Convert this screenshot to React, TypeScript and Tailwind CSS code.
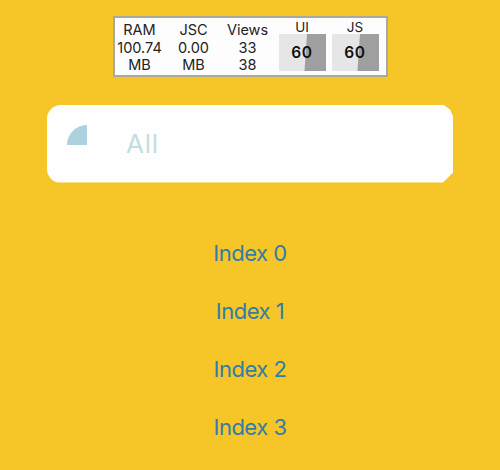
const stats = [
  { label: "RAM", lines: ["100.74", "MB"] },
  { label: "JSC", lines: ["0.00", "MB"] },
  { label: "Views", lines: ["33", "38"] },
];

function Stat({ label, lines }: { label: string; lines: string[] }) {
  return (
    <div className="flex w-[54px] flex-col items-center pt-[3px] text-[14.5px] leading-[17.5px] whitespace-nowrap text-[#222]">
      <span>{label}</span>
      {lines.map((line) => (
        <span key={line}>{line}</span>
      ))}
    </div>
  );
}

function FpsGraph({ label, fps }: { label: string; fps: number }) {
  return (
    <div className="flex w-[47px] flex-col items-center text-[#222]">
      <span className="h-[15px] text-[13.5px] leading-[17px]">{label}</span>
      <div className="relative flex h-[37px] w-full items-center justify-center bg-[#e6e6e6]">
        <svg className="absolute inset-0 h-full w-full" viewBox="0 0 47 37">
          <path d="M28 0H47V37H25.5Z" fill="#9f9f9f" />
        </svg>
        <span className="relative text-[15.5px] font-semibold tracking-[0.6px] text-[#111]">
          {fps}
        </span>
      </div>
    </div>
  );
}

export default function App() {
  return (
    <div className="flex h-[470px] w-[500px] flex-col items-center overflow-hidden bg-[#f6c628] pt-4 font-['Inter','Liberation_Sans',sans-serif]">
      <div className="flex h-[61px] w-[275px] border-2 border-[#aaa99d] bg-[#fdfdfd]">
        <div className="-ml-0.5 flex w-[166px] shrink-0">
          {stats.map((s) => (
            <Stat key={s.label} {...s} />
          ))}
        </div>
        <div className="flex gap-[6px] pt-px">
          <FpsGraph label="UI" fps={60} />
          <FpsGraph label="JS" fps={60} />
        </div>
      </div>

      <div className="mt-[27.5px] flex h-[78px] w-[406px] items-start rounded-l-[14px] bg-[#fefefe] [clip-path:polygon(0_0,396px_0,403px_5px,406px_12px,406px_68px,396px_100%,0_100%)]">
        <svg className="mt-[20px] ml-[20px] h-5 w-5" viewBox="0 0 20 20">
          <path d="M20 0V20H0C0 9 9 0 20 0Z" fill="#add1df" />
        </svg>
        <span className="mt-[23px] ml-[39px] text-[26px] leading-8 tracking-[0.7px] text-[#c1dfe1]">All</span>
      </div>

      <div className="mt-[41.5px] flex flex-col items-center text-[22px] tracking-[-0.5px] text-[#327ca8]">
        {[0, 1, 2, 3].map((i) => (
          <div key={i} className="flex h-[58px] items-center">
            Index {i}
          </div>
        ))}
      </div>
    </div>
  );
}
